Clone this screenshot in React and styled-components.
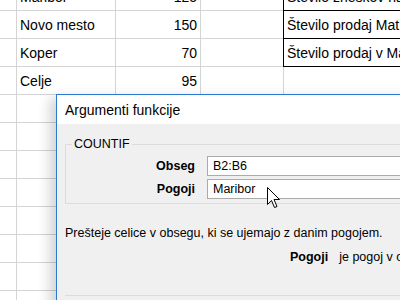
import React from 'react';
import styled, { createGlobalStyle } from 'styled-components';

const Global = createGlobalStyle`
  html, body {
    margin: 0;
    padding: 0;
    width: 400px;
    height: 300px;
    overflow: hidden;
    background: #ffffff;
  }
`;

const Stage = styled.div`
  position: relative;
  width: 400px;
  height: 300px;
  overflow: hidden;
  font-family: "Liberation Sans", Arial, sans-serif;
`;

const Sheet = styled.div`
  display: grid;
  grid-template-columns: 17px 99px 85px 83px 140px;
  grid-auto-rows: 28px;
  margin-top: -17px;
`;

const Cell = styled.div`
  box-sizing: border-box;
  border-right: 1px solid #d4d4d4;
  border-bottom: 1px solid ${(p) => (p.$boxed ? '#000' : '#d4d4d4')};
  border-left: ${(p) => (p.$boxed ? '1px solid #000' : 'none')};
  margin-left: ${(p) => (p.$boxed ? '-1px' : '0')};
  display: flex;
  align-items: center;
  justify-content: ${(p) => (p.$num ? 'flex-end' : 'flex-start')};
  padding: 0 3px;
  font-size: 14px;
  color: #000;
  white-space: nowrap;
  overflow: hidden;
`;

const Dialog = styled.div`
  position: absolute;
  left: 56px;
  top: 94px;
  width: 360px;
  height: 220px;
  background: #f0f0f0;
  border: 1px solid #2b78d0;
  box-shadow: -6px 4px 12px rgba(0, 0, 0, 0.18);
  font-family: "Liberation Sans", Arial, sans-serif;
  color: #000;
`;

const TitleBar = styled.div`
  height: 29px;
  background: #fff;
  display: flex;
  align-items: center;
  padding-left: 8px;
  font-size: 14px;
`;

const Body = styled.div`
  padding: 13px 0 0 8px;
`;

const Group = styled.fieldset`
  margin: 0;
  padding: 5px 0 4px 0;
  border: 1px solid #dcdcdc;
  border-right: none;
  display: grid;
  grid-template-columns: 129px 1fr;
  row-gap: 3px;
  align-items: center;
`;

const Legend = styled.legend`
  padding: 0 2px;
  margin-left: 6px;
  font-size: 12.5px;
`;

const Label = styled.div`
  text-align: right;
  font-weight: bold;
  font-size: 12.5px;
`;

const Field = styled.div`
  box-sizing: border-box;
  height: 20px;
  margin-left: 12px;
  background: #fff;
  border: 1px solid #ababab;
  border-right: none;
  display: flex;
  align-items: center;
  padding-left: 5px;
  font-size: 12.5px;
`;

const Desc = styled.div`
  margin-top: 22px;
  font-size: 12.5px;
`;

const ArgHelp = styled.div`
  margin-top: 10px;
  padding-left: 225px;
  display: flex;
  gap: 11px;
  font-size: 12.5px;
  white-space: nowrap;
`;

const Bold = styled.span`
  font-weight: bold;
`;

const Divider = styled.div`
  margin-top: 31px;
  height: 1px;
  background: #dcdcdc;
`;

const Pointer = styled.svg`
  position: absolute;
  left: 267px;
  top: 187px;
`;

const rows = [
  { a: 'Maribor', b: '125', e: 'Število zneskov na' },
  { a: 'Novo mesto', b: '150', e: 'Število prodaj Mat' },
  { a: 'Koper', b: '70', e: 'Število prodaj v Ma' },
  { a: 'Celje', b: '95' },
  {}, {}, {}, {}, {}, {}, {}, {},
];

export default function App() {
  return (
    <Stage>
      <Global />
      <Sheet>
        {rows.map((r, i) => (
          <React.Fragment key={i}>
            <Cell />
            <Cell>{r.a}</Cell>
            <Cell $num>{r.b}</Cell>
            <Cell />
            <Cell $boxed={!!r.e}>{r.e}</Cell>
          </React.Fragment>
        ))}
      </Sheet>
      <Dialog>
        <TitleBar>Argumenti funkcije</TitleBar>
        <Body>
          <Group>
            <Legend>COUNTIF</Legend>
            <Label>Obseg</Label>
            <Field>B2:B6</Field>
            <Label>Pogoji</Label>
            <Field>Maribor</Field>
          </Group>
          <Desc>Prešteje celice v obsegu, ki se ujemajo z danim pogojem.</Desc>
          <ArgHelp>
            <Bold>Pogoji</Bold>
            <span>je pogoj v obliki števila, izraza ali besedila</span>
          </ArgHelp>
          <Divider />
        </Body>
      </Dialog>
      <Pointer width="14" height="24" viewBox="0 0 14 24">
        <path d="M0.5 0.5 L0.5 17.5 L4.5 13.5 L7.5 20.5 L10 19.5 L7 12.5 L12.5 12.5 Z" fill="#fff" stroke="#000" strokeWidth="1" />
      </Pointer>
    </Stage>
  );
}
